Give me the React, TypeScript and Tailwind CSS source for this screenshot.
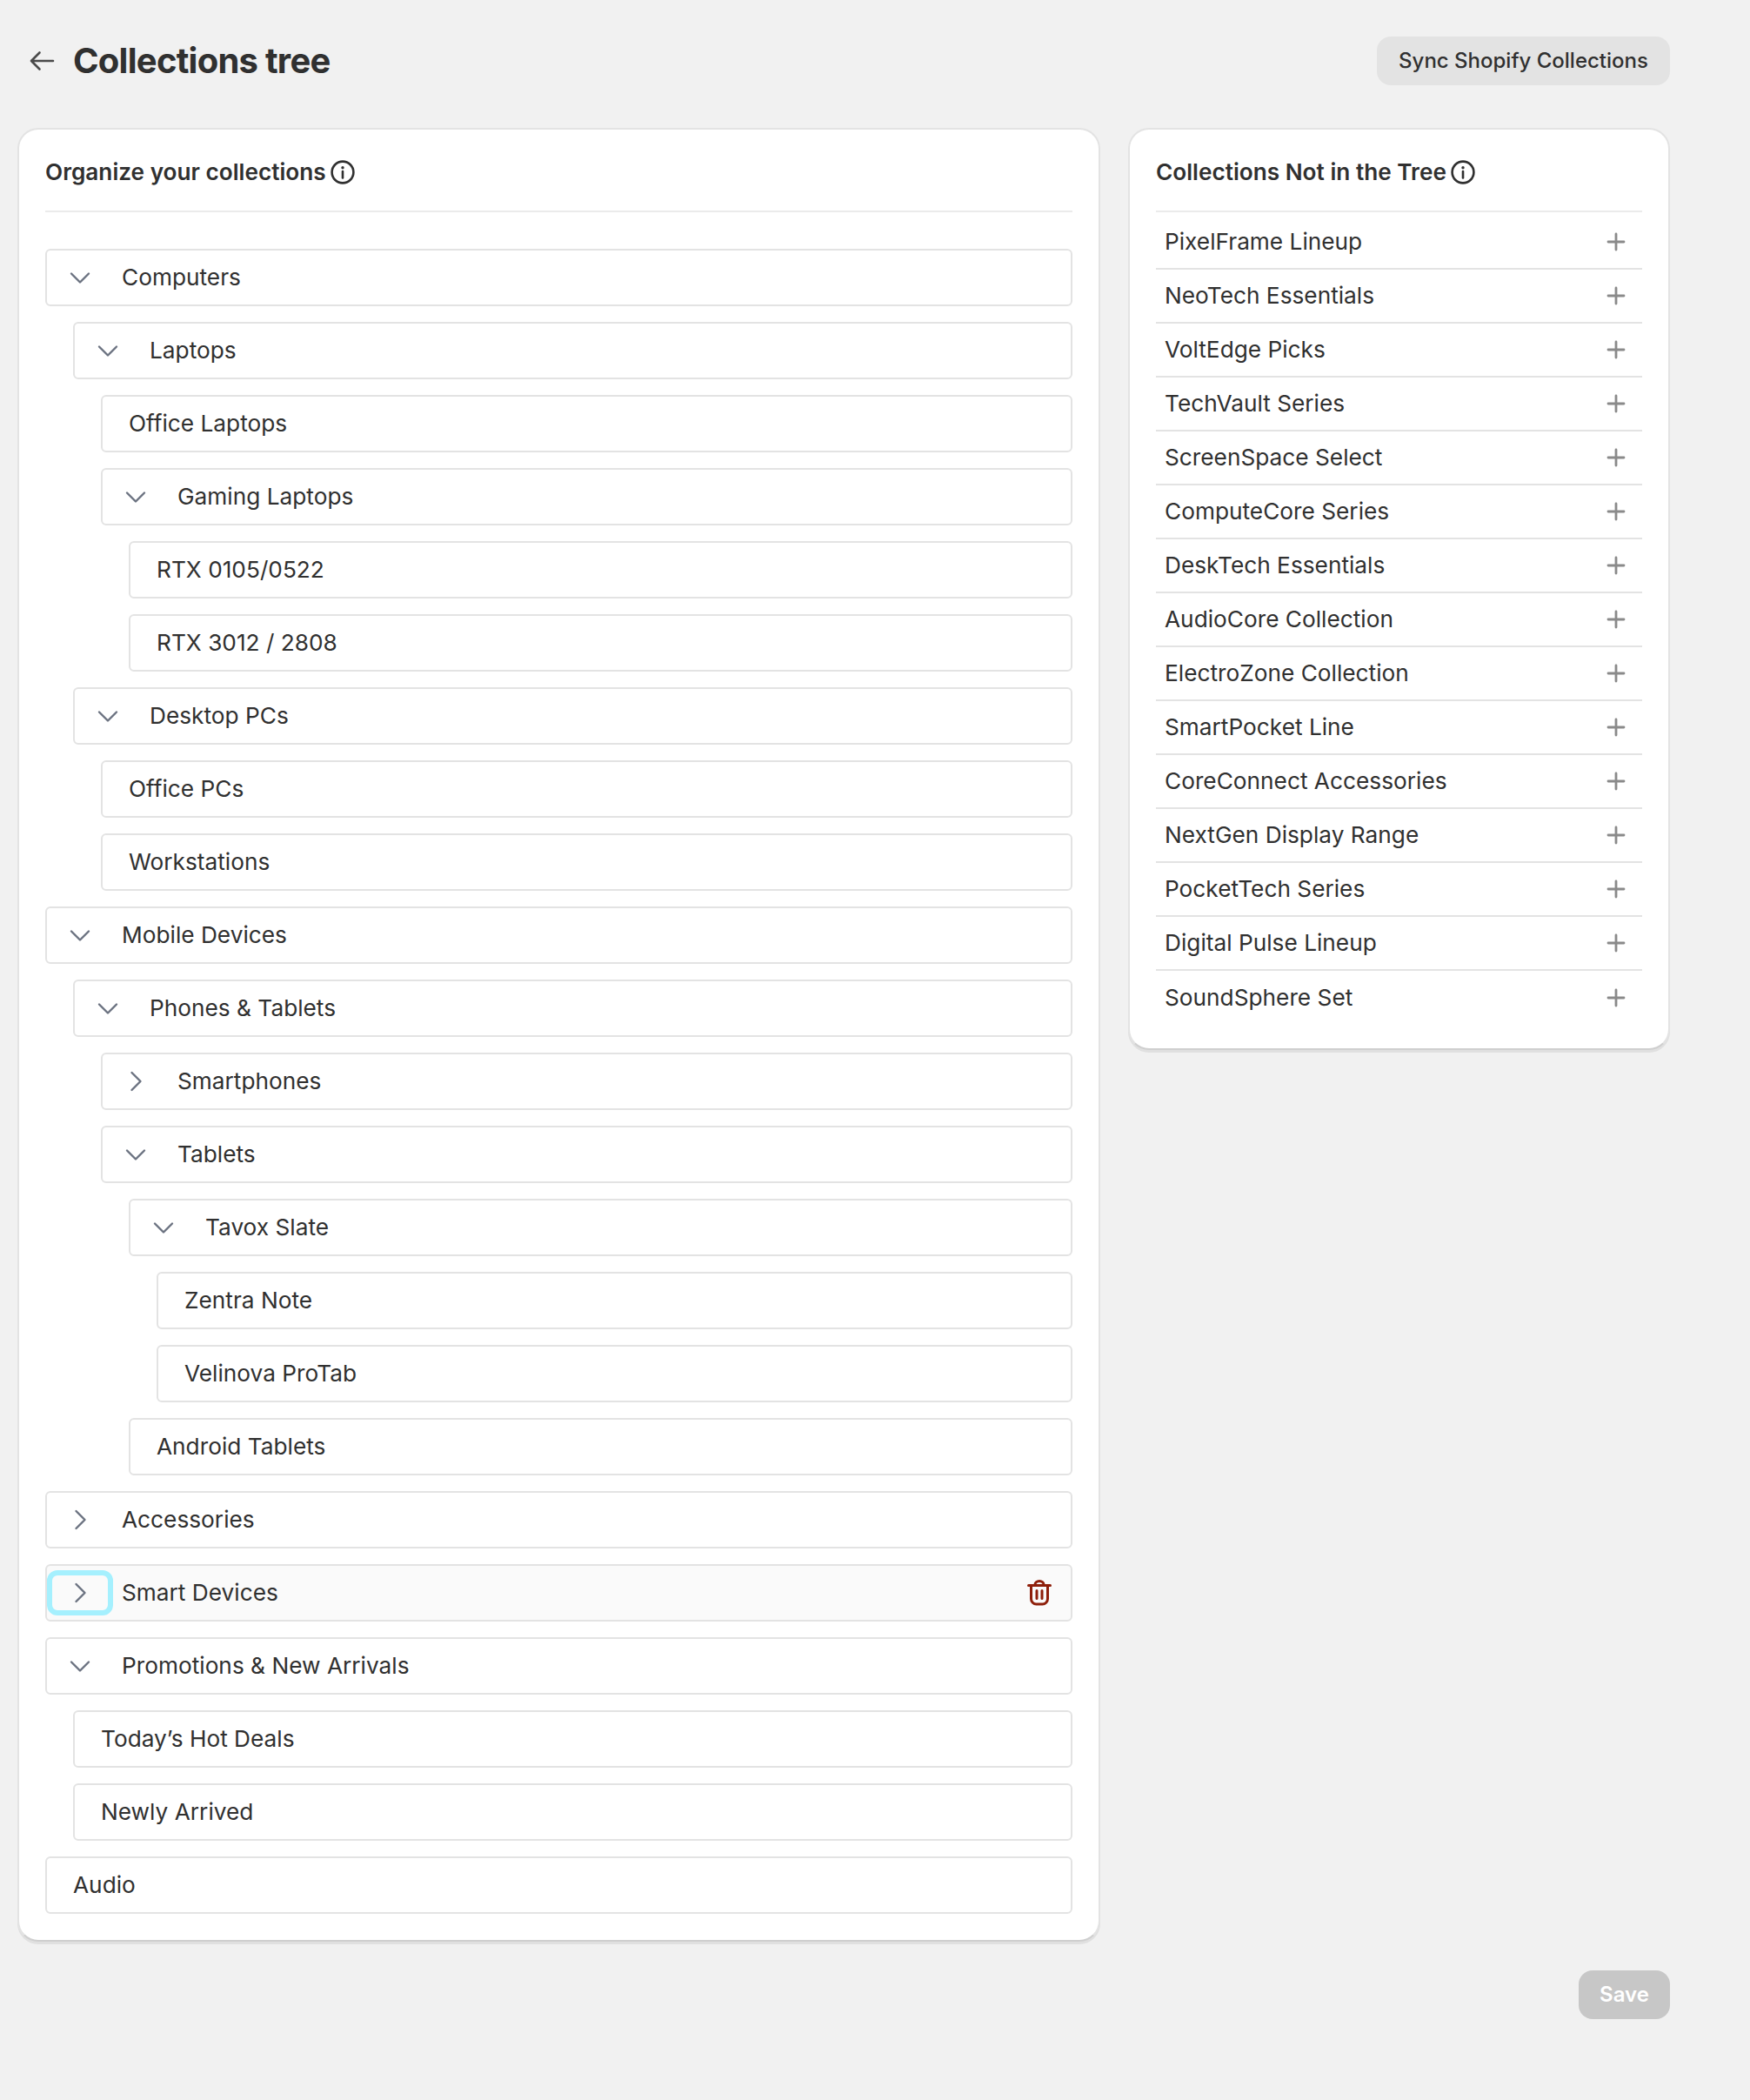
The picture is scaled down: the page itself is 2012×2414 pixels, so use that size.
import React from "react";

type Node = { name: string; open?: boolean; kids?: Node[]; closed?: boolean; active?: boolean };

const tree: Node[] = [
  { name: "Computers", open: true, kids: [
    { name: "Laptops", open: true, kids: [
      { name: "Office Laptops" },
      { name: "Gaming Laptops", open: true, kids: [{ name: "RTX 0105/0522" }, { name: "RTX 3012 / 2808" }] },
    ]},
    { name: "Desktop PCs", open: true, kids: [{ name: "Office PCs" }, { name: "Workstations" }] },
  ]},
  { name: "Mobile Devices", open: true, kids: [
    { name: "Phones & Tablets", open: true, kids: [
      { name: "Smartphones", closed: true },
      { name: "Tablets", open: true, kids: [
        { name: "Tavox Slate", open: true, kids: [{ name: "Zentra Note" }, { name: "Velinova ProTab" }] },
        { name: "Android Tablets" },
      ]},
    ]},
  ]},
  { name: "Accessories", closed: true },
  { name: "Smart Devices", closed: true, active: true },
  { name: "Promotions & New Arrivals", open: true, kids: [{ name: "Today’s Hot Deals" }, { name: "Newly Arrived" }] },
  { name: "Audio" },
];

const loose = [
  "PixelFrame Lineup", "NeoTech Essentials", "VoltEdge Picks", "TechVault Series", "ScreenSpace Select",
  "ComputeCore Series", "DeskTech Essentials", "AudioCore Collection", "ElectroZone Collection", "SmartPocket Line",
  "CoreConnect Accessories", "NextGen Display Range", "PocketTech Series", "Digital Pulse Lineup", "SoundSphere Set",
];

function Info() {
  return (
    <svg width="28" height="28" viewBox="0 0 28 28" fill="none" className="shrink-0">
      <circle cx="14" cy="14" r="12.4" stroke="#303030" strokeWidth="2.6" />
      <circle cx="14" cy="8.8" r="1.7" fill="#303030" />
      <path d="M14 13v7.5" stroke="#303030" strokeWidth="2.6" strokeLinecap="round" />
    </svg>
  );
}

function Chevron({ closed }: { closed?: boolean }) {
  return (
    <svg width="30" height="30" viewBox="0 0 30 30" fill="none">
      {closed ? (
        <path d="M10.5 5l10 10-10 10" stroke="#6b7280" strokeWidth="2.4" strokeLinecap="round" strokeLinejoin="round" />
      ) : (
        <path d="M5 10.5l10 10 10-10" stroke="#6b7280" strokeWidth="2.4" strokeLinecap="round" strokeLinejoin="round" />
      )}
    </svg>
  );
}

function Trash() {
  return (
    <svg width="28" height="30" viewBox="0 0 28 30" fill="none">
      <path d="M1.5 6.5h25" stroke="#8e1f0b" strokeWidth="3" strokeLinecap="round" />
      <path d="M9 6.5V5.5a5 4 0 0 1 10 0v1" stroke="#8e1f0b" strokeWidth="3" />
      <path d="M4.5 6.5v15.5a6 6 0 0 0 6 6h7a6 6 0 0 0 6-6V6.5" stroke="#8e1f0b" strokeWidth="3" />
      <path d="M11 12.5v9M17 12.5v9" stroke="#8e1f0b" strokeWidth="3" strokeLinecap="round" />
    </svg>
  );
}

function Row({ node }: { node: Node }) {
  const hasToggle = node.open || node.closed;
  return (
    <div
      className={
        "h-[66px] rounded-[6px] border-2 border-[#e3e3e3] flex items-center text-[26.25px] text-[#303030] " +
        (node.active ? "bg-[#fafafa]" : "bg-white")
      }
    >
      {hasToggle ? (
        <div className="relative w-[86px] h-full flex items-center justify-center shrink-0">
          <div className="pr-[11px] flex items-center">
            <Chevron closed={node.closed} />
          </div>
          {node.active && (
            <div className="absolute left-0 top-[5px] w-[76px] h-[52px] rounded-[12px] border-[6px] border-[#a5f0fe]" />
          )}
        </div>
      ) : (
        <div className="w-[30px] shrink-0" />
      )}
      <span className="flex-1">{node.name}</span>
      {node.active && (
        <div className="pr-[22px] flex items-center">
          <Trash />
        </div>
      )}
    </div>
  );
}

function TreeList({ nodes }: { nodes: Node[] }) {
  return (
    <div className="flex flex-col gap-[18px]">
      {nodes.map((n) => (
        <div key={n.name} className="flex flex-col gap-[18px]">
          <Row node={n} />
          {n.kids && (
            <div className="pl-[32px]">
              <TreeList nodes={n.kids} />
            </div>
          )}
        </div>
      ))}
    </div>
  );
}

export default function App() {
  return (
    <div className="w-[2012px] h-[2414px] bg-[#f1f1f1] pl-[20px] pr-[92px] pt-[42px] text-[#303030] font-['Inter',sans-serif]">
      <div className="h-[56px] flex items-center justify-between">
        <div className="flex items-center">
          <div className="w-[64px] pl-[13px] flex items-center">
            <svg width="30" height="26" viewBox="0 0 30 26" fill="none">
              <path d="M28 13H3M12.5 3.5L3 13l9.5 9.5" stroke="#4a4a4a" strokeWidth="2.6" strokeLinecap="round" strokeLinejoin="round" />
            </svg>
          </div>
          <h1 className="text-[40px] font-bold tracking-[-0.75px]">Collections tree</h1>
        </div>
        <button className="h-[56px] w-[337px] rounded-[16px] bg-[#e3e3e3] text-[24px] font-medium text-[#303030]">
          Sync Shopify Collections
        </button>
      </div>

      <div className="mt-[49px] flex items-start gap-[32px]">
        <section className="w-[1245px] h-[2085px] bg-white rounded-[24px] border-2 border-[#e3e3e3] border-b-[#cfcfcf] shadow-[0_3px_0_#e0e0e0] px-[30px]">
          <div className="h-[95px] flex items-center gap-[5px] border-b-2 border-[#ebebeb] text-[26.2px] font-semibold pt-[5px]">
            <span>Organize your collections</span>
            <Info />
          </div>
          <div className="pt-[42px]">
            <TreeList nodes={tree} />
          </div>
        </section>

        <section className="w-[623px] h-[1060px] bg-white rounded-[24px] border-2 border-[#e3e3e3] border-b-[#cfcfcf] shadow-[0_3px_0_#e0e0e0] px-[30px]">
          <div className="h-[95px] flex items-center gap-[5px] border-b-2 border-[#ebebeb] text-[26.2px] font-semibold pt-[5px]">
            <span>Collections Not in the Tree</span>
            <Info />
          </div>
          <ul className="pt-[4px]">
            {loose.map((name, i) => (
              <li
                key={name}
                className={
                  "h-[62px] pl-[10px] pr-[19px] flex items-center justify-between text-[26.25px] " +
                  (i < loose.length - 1 ? "border-b-2 border-[#e3e3e3]" : "")
                }
              >
                <span>{name}</span>
                <svg width="22" height="22" viewBox="0 0 22 22" fill="none">
                  <path d="M11 2v18M2 11h18" stroke="#8a8a8a" strokeWidth="2.8" strokeLinecap="round" />
                </svg>
              </li>
            ))}
          </ul>
        </section>
      </div>

      <div className="mt-[33px] flex justify-end">
        <button className="w-[105px] h-[56px] rounded-[16px] bg-[#c7c7c7] text-white text-[24px] font-semibold">Save</button>
      </div>
    </div>
  );
}
